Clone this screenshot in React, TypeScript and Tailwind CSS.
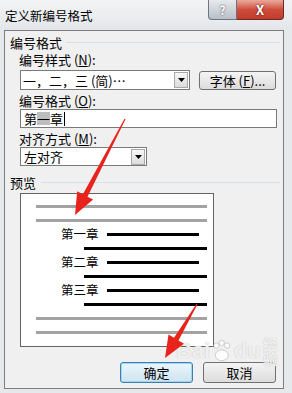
import React from 'react';

const FONT = { fontFamily: '"Noto Sans CJK SC", "Noto Sans", sans-serif' };

// one 14px line of the preview box
const PreviewRow: React.FC<{ kind: 'gray' | 'black' | 'label'; label?: string }> = ({ kind, label }) => {
  if (kind === 'gray') {
    return (
      <div className="h-[14px] flex items-center pl-[15px]">
        <div className="h-[3px] w-[171px] bg-[#a3a3a3]" />
      </div>
    );
  }
  if (kind === 'black') {
    return (
      <div className="h-[14px] flex items-center pl-[63px]">
        <div className="h-[3px] w-[123px] bg-black" />
      </div>
    );
  }
  return (
    <div className="h-[14px] flex items-center pl-[40px]">
      <span className="w-[39px] text-[12.5px] leading-none text-black whitespace-nowrap">{label}</span>
      <div className="ml-[7px] h-[3px] w-[92px] bg-black" />
    </div>
  );
};

const DropButton: React.FC = () => (
  <div className="h-[16px] w-[14px] border border-[#a9a9a9] bg-gradient-to-b from-[#f7f7f7] to-[#dcdcdc] flex items-center justify-center">
    <svg width="7" height="4" viewBox="0 0 7 4">
      <path d="M0 0 L7 0 L3.5 4 Z" fill="#000" />
    </svg>
  </div>
);

const Arrow: React.FC<{ x1: number; y1: number; x2: number; y2: number }> = ({ x1, y1, x2, y2 }) => {
  const dx = x2 - x1;
  const dy = y2 - y1;
  const len = Math.hypot(dx, dy);
  const ux = dx / len;
  const uy = dy / len;
  const px = -uy;
  const py = ux;
  const headLen = 22;
  const headW = 9;
  const bx = x2 - ux * headLen;
  const by = y2 - uy * headLen;
  const pts = [
    [x1 + px * 0.6, y1 + py * 0.6],
    [bx + px * 2.6, by + py * 2.6],
    [bx + px * headW, by + py * headW],
    [x2, y2],
    [bx - px * headW, by - py * headW],
    [bx - px * 2.6, by - py * 2.6],
    [x1 - px * 0.6, y1 - py * 0.6],
  ]
    .map(p => p.map(v => v.toFixed(1)).join(','))
    .join(' ');
  return <polygon points={pts} fill="#e8231c" />;
};

const App: React.FC = () => {
  return (
    <div className="relative w-[292px] h-[393px] overflow-hidden bg-[#e6e9ec]" style={FONT}>
      {/* title bar */}
      <div className="h-[30px] flex items-start bg-gradient-to-b from-[#f2f3f4] to-[#e4e7ea]">
        <div className="mt-[8px] pl-[5px] text-[12.5px] leading-[16px] text-black">定义新编号格式</div>
        <div className="ml-auto mr-[8px] flex">
          <div className="h-[20px] w-[29px] rounded-bl-[4px] border border-t-0 border-[#6b7480] bg-gradient-to-b from-[#e6e9ed] to-[#b9c0c8] flex items-center justify-center text-[12px] font-bold text-white [text-shadow:0_0_2px_#333]">
            ?
          </div>
          <div className="h-[20px] w-[47px] rounded-br-[4px] border border-l-0 border-t-0 border-[#6e2a22] bg-gradient-to-b from-[#e9a99d] via-[#cf4d3c] to-[#c13b2b] flex items-center justify-center text-[13px] font-bold text-white [text-shadow:0_0_2px_#400]">
            X
          </div>
        </div>
      </div>

      {/* client area */}
      <div className="ml-[4px] w-[280px] h-[359px] border border-[#7d7d7d] bg-[#f0f0f0] flex flex-col text-[13px] text-black">
        {/* group header */}
        <div className="mt-[4px] h-[14px] flex items-center pl-[5px]">
          <span className="leading-none">编号格式</span>
          <div className="ml-[4px] mr-[3px] flex-1 h-px bg-[#d5dfe5]" />
        </div>

        <div className="mt-[3px] h-[14px] flex items-center pl-[14px] leading-none">
          编号样式 (<span className="underline">N</span>):
        </div>

        <div className="mt-[4px] h-[20px] flex items-center pl-[15px]">
          <div className="h-[20px] w-[170px] border border-[#7a7a7a] bg-white flex items-center pl-[2px] pr-[1px]">
            <span className="flex-1 leading-none whitespace-nowrap">一，二，三 (简)…</span>
            <DropButton />
          </div>
          <div className="ml-[9px] h-[19px] w-[77px] rounded-[3px] border border-[#707070] bg-gradient-to-b from-[#f4f4f4] to-[#dcdcdc] flex items-center justify-center leading-none whitespace-nowrap">
            字体 (<span className="underline">F</span>)...
          </div>
        </div>

        <div className="mt-[3px] h-[14px] flex items-center pl-[14px] leading-none">
          编号格式 (<span className="underline">O</span>):
        </div>

        <div className="mt-[2px] h-[19px] ml-[15px] w-[257px] border border-[#7a7a7a] bg-white flex items-center pl-[3px]">
          <span className="leading-none">第</span>
          <span className="leading-none bg-[#bdbdbd]">一</span>
          <span className="leading-none">章</span>
          <span className="ml-[1px] h-[14px] w-px bg-black" />
        </div>

        <div className="mt-[3px] h-[14px] flex items-center pl-[14px] leading-none">
          对齐方式 (<span className="underline">M</span>):
        </div>

        <div className="mt-[2px] ml-[15px] h-[19px] w-[127px] border border-[#7a7a7a] bg-white flex items-center pl-[3px] pr-[1px]">
          <span className="flex-1 leading-none">左对齐</span>
          <DropButton />
        </div>

        <div className="mt-[9px] h-[14px] flex items-center pl-[5px]">
          <span className="leading-none">预览</span>
          <div className="ml-[5px] mr-[3px] flex-1 h-px bg-[#d5dfe5]" />
        </div>

        <div className="mt-[4px] ml-[15px] w-[194px] h-[154px] border border-[#646464] bg-white pt-[5px]">
          <PreviewRow kind="gray" />
          <PreviewRow kind="gray" />
          <PreviewRow kind="label" label="第一章" />
          <PreviewRow kind="black" />
          <PreviewRow kind="label" label="第二章" />
          <PreviewRow kind="black" />
          <PreviewRow kind="label" label="第三章" />
          <PreviewRow kind="black" />
          <PreviewRow kind="gray" />
          <PreviewRow kind="gray" />
        </div>

        <div className="mt-[15px] flex justify-end gap-[10px] pr-[7px]">
          <div className="h-[21px] w-[73px] rounded-[3px] border border-[#3c7fb1] bg-gradient-to-b from-[#eaf6fd] to-[#cfe3ef] shadow-[inset_0_0_0_1px_#9fd6f3] flex items-center justify-center leading-none">
            确定
          </div>
          <div className="h-[21px] w-[73px] rounded-[3px] border border-[#707070] bg-gradient-to-b from-[#f4f4f4] to-[#dcdcdc] flex items-center justify-center leading-none">
            取消
          </div>
        </div>
      </div>

      {/* baidu watermark */}
      <div className="absolute left-[176px] top-[336px] flex items-center text-[22px] font-bold leading-none text-white/80 [text-shadow:0_0_1px_#aaa]" style={{ fontFamily: '"Liberation Sans", sans-serif' }}>
        <span>Bai</span>
        <svg width="22" height="24" viewBox="0 0 20 22" className="mx-[1px] opacity-80">
          <circle cx="5" cy="6" r="2.5" fill="#fff" stroke="#aaa" strokeWidth="0.6" />
          <circle cx="10" cy="3.5" r="2.5" fill="#fff" stroke="#aaa" strokeWidth="0.6" />
          <circle cx="15" cy="6" r="2.5" fill="#fff" stroke="#aaa" strokeWidth="0.6" />
          <ellipse cx="10" cy="15" rx="6" ry="5" fill="#fff" stroke="#aaa" strokeWidth="0.6" />
        </svg>
        <span>du</span>
        <span className="ml-[2px] text-[15px]" style={FONT}>经验</span>
      </div>

      {/* red arrows */}
      <svg className="absolute left-0 top-0 pointer-events-none" width="292" height="393" viewBox="0 0 292 393">
        <Arrow x1={125} y1={119} x2={75} y2={215} />
        <Arrow x1={197} y1={304} x2={165} y2={358} />
      </svg>
    </div>
  );
};

export default App;
